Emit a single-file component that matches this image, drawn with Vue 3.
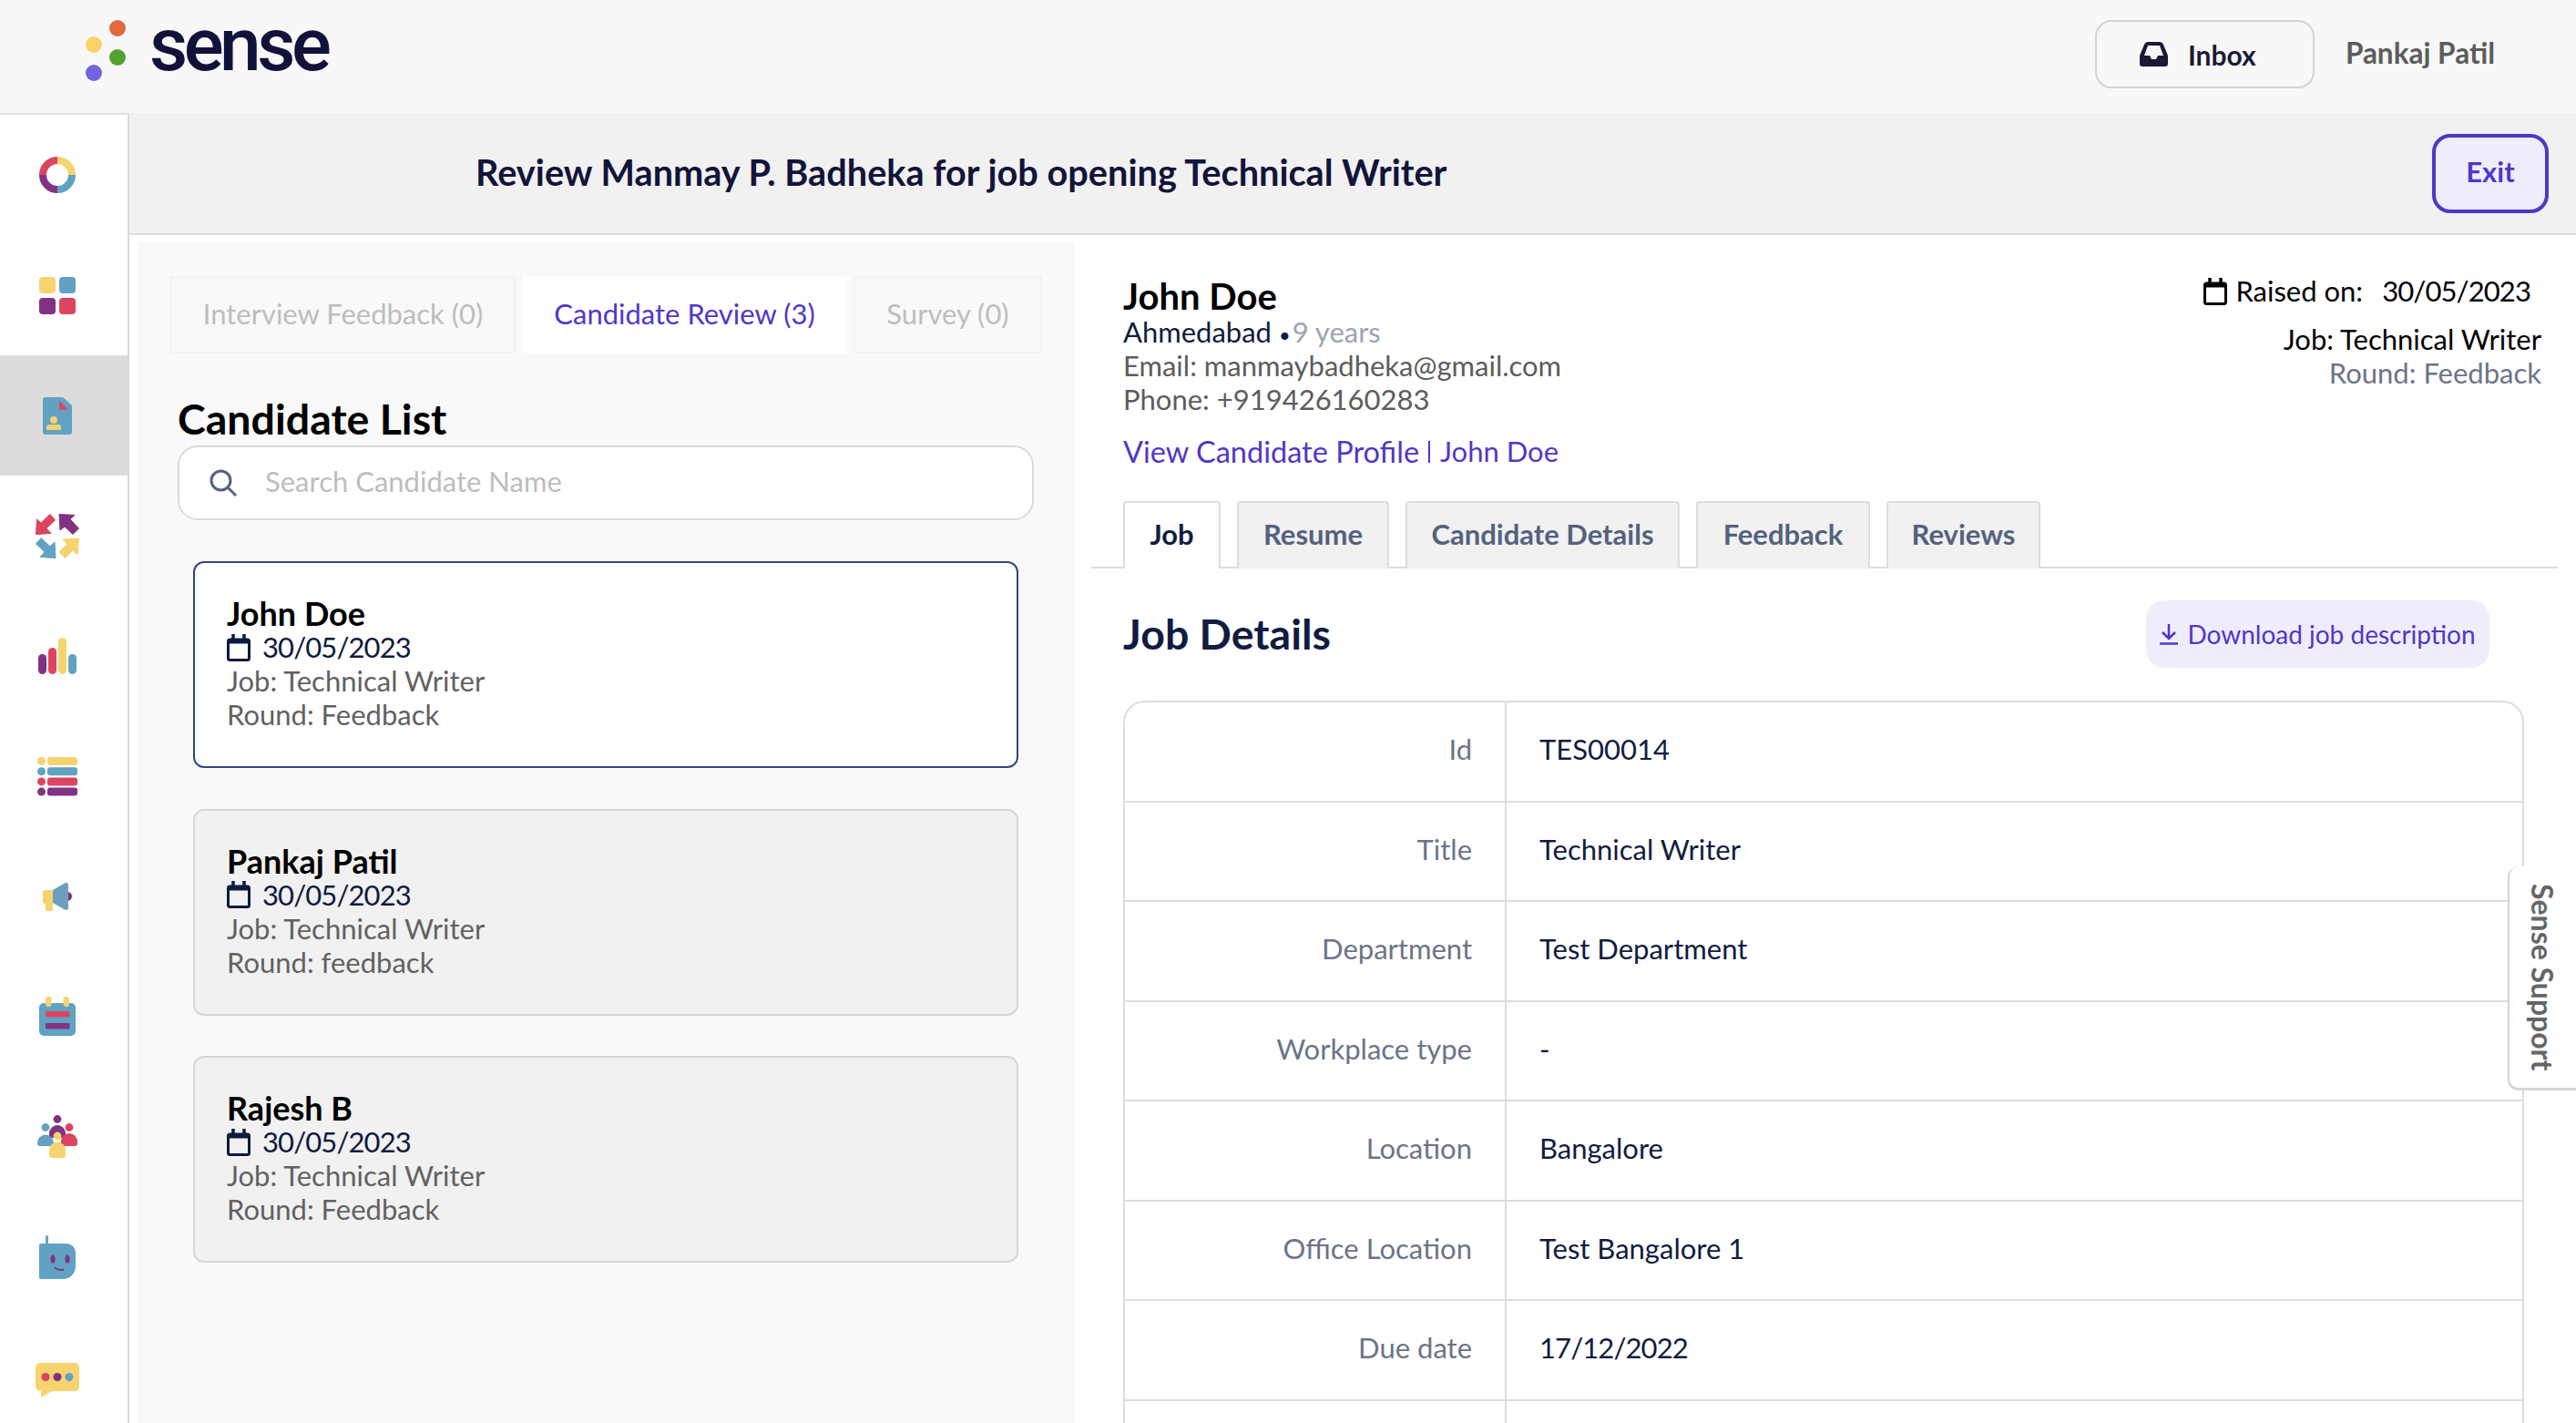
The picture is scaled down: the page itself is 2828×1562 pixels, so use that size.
<script setup>
const navIcons = ['donut', 'grid', 'doc', 'arrows', 'bars', 'list', 'mega', 'cal', 'people', 'robot', 'chat']
const candidates = [
  { name: 'John Doe', round: 'Feedback', selected: true },
  { name: 'Pankaj Patil', round: 'feedback', selected: false },
  { name: 'Rajesh B', round: 'Feedback', selected: false }
]
const detailTabs = ['Job', 'Resume', 'Candidate Details', 'Feedback', 'Reviews']
const rows = [
  ['Id', 'TES00014'],
  ['Title', 'Technical Writer'],
  ['Department', 'Test Department'],
  ['Workplace type', '-'],
  ['Location', 'Bangalore'],
  ['Office Location', 'Test Bangalore 1'],
  ['Due date', '17/12/2022'],
  ['', '']
]
</script>

<template>
  <div class="page">
    <header class="topbar">
      <div class="logo">
        <svg class="logo-dots" width="44" height="68" viewBox="0 0 44 68">
          <circle cx="35" cy="9" r="9" fill="#e3683a" />
          <circle cx="9" cy="27" r="9" fill="#fad468" />
          <circle cx="35" cy="41" r="9" fill="#53a32f" />
          <circle cx="9" cy="58" r="9" fill="#7264e0" />
        </svg>
        <span class="logo-text">sense</span>
      </div>
      <div class="top-right">
        <button class="inbox">
          <svg width="31" height="27" viewBox="0 0 31 27">
            <path fill="#1b1a35" fill-rule="evenodd" d="M9 0h13c2 0 3 1 4 3l5 12v9c0 2-1 3-3 3H3c-2 0-3-1-3-3v-9L5 3c1-2 2-3 4-3zM9 4 5 15h6l2 4h5l2-4h6L22 4z" />
          </svg>
          <span>Inbox</span>
        </button>
        <span class="user">Pankaj Patil</span>
      </div>
    </header>

    <div class="main">
      <nav class="sidebar">
        <div v-for="icon in navIcons" :key="icon" class="nav-item" :class="[icon, { active: icon === 'doc' }]">
          <svg v-if="icon === 'donut'" width="40" height="40" viewBox="0 0 40 40" fill="none" stroke-width="8">
            <path d="M20 4a16 16 0 0 1 16 16" stroke="#f6d36f" />
            <path d="M36 20a16 16 0 0 1-16 16" stroke="#61a2c3" />
            <path d="M20 36A16 16 0 0 1 4 20" stroke="#823283" />
            <path d="M4 20A16 16 0 0 1 20 4" stroke="#dc4560" />
          </svg>
          <svg v-else-if="icon === 'grid'" width="40" height="41" viewBox="0 0 40 41">
            <rect width="18" height="18" rx="4" fill="#f6d36f" />
            <rect x="22" width="18" height="18" rx="4" fill="#61a2c3" />
            <rect y="23" width="18" height="18" rx="4" fill="#823283" />
            <rect x="22" y="23" width="18" height="18" rx="4" fill="#dc4560" />
          </svg>
          <svg v-else-if="icon === 'doc'" width="32" height="41" viewBox="0 0 32 41">
            <path d="M3 0h19l10 9v29a3 3 0 0 1-3 3H3a3 3 0 0 1-3-3V3a3 3 0 0 1 3-3z" fill="#61a2c3" />
            <path d="M18 4l10 10H18z" fill="#dc4560" />
            <circle cx="12" cy="25" r="4" fill="#f6d36f" />
            <path d="M4 36v-3a3 3 0 0 1 3-3h10a3 3 0 0 1 3 3v3z" fill="#f6d36f" />
          </svg>
          <svg v-else-if="icon === 'arrows'" width="48" height="49" viewBox="0 0 48 49" stroke-width="1" stroke-linejoin="round">
            <polygon points="0.5,22.5 1.5,6 6,10 16,0.5 21.5,7 12,16 17,21.5" fill="#dc4560" stroke="#dc4560" />
            <polygon points="26,0.5 43,1.5 38,6 47.5,16 41,22.5 32,14 27,18" fill="#823283" stroke="#823283" />
            <polygon points="22,48.5 21,31 16,36 6,26.5 0.5,33 10,42 5,47.5" fill="#61a2c3" stroke="#61a2c3" />
            <polygon points="47.5,27 30,28 35,33.5 26,42 33,48.5 41,40 46,45" fill="#f6d36f" stroke="#f6d36f" />
          </svg>
          <svg v-else-if="icon === 'bars'" width="42" height="40" viewBox="0 0 42 40">
            <rect y="18" width="9" height="22" rx="4.5" fill="#823283" />
            <rect x="11" y="11" width="9" height="29" rx="4.5" fill="#dc4560" />
            <rect x="22" width="9" height="40" rx="4.5" fill="#f6d36f" />
            <rect x="33" y="18" width="9" height="22" rx="4.5" fill="#61a2c3" />
          </svg>
          <svg v-else-if="icon === 'list'" width="44" height="43" viewBox="0 0 44 43">
            <g v-for="(c, i) in ['#f6d36f', '#61a2c3', '#dc4560', '#823283']" :key="c" :fill="c">
              <circle cx="4.5" :cy="4.5 + i * 11.2" r="4.5" />
              <rect x="11" :y="i * 11.2" width="33" height="9" rx="3" />
            </g>
          </svg>
          <svg v-else-if="icon === 'mega'" width="32" height="31" viewBox="0 0 32 31">
            <path d="M27 10a5 5 0 0 1 0 10z" fill="#823283" />
            <path d="M3 8h8v15h0v6a2 2 0 0 1-2 2H5a2 2 0 0 1-2-2v-6H2a2 2 0 0 1-2-2V10a2 2 0 0 1 2-2z" fill="#f6d36f" />
            <path d="M11 8 24 .5c2-1 4 0 4 2v25c0 2-2 3-4 2L11 22z" fill="#6d9fbf" />
          </svg>
          <svg v-else-if="icon === 'cal'" width="40" height="43" viewBox="0 0 40 43">
            <rect y="7" width="40" height="36" rx="5" fill="#61a2c3" />
            <rect x="7" width="6.5" height="11" rx="3" fill="#f6d36f" />
            <rect x="26.5" width="6.5" height="11" rx="3" fill="#f6d36f" />
            <rect x="7" y="16" width="26.5" height="6.5" rx="1.5" fill="#dc4560" />
            <rect x="7" y="29" width="26.5" height="6.5" rx="1.5" fill="#823283" />
          </svg>
          <svg v-else-if="icon === 'people'" width="44" height="47" viewBox="0 0 44 47">
            <circle cx="22" cy="4.5" r="4.4" fill="#823283" />
            <path d="M13 25v-5a9 9 0 0 1 18 0v5z" fill="#823283" />
            <circle cx="9" cy="13.5" r="4.4" fill="#61a2c3" />
            <path d="M0 30.500a9 9 0 0 1 18 0V34H3a3 3 0 0 1-3-3z" fill="#61a2c3" />
            <circle cx="35" cy="13.500" r="4.400" fill="#dc4560" />
            <path d="M26 34v-5a9 9 0 0 1 18 0v2a3 3 0 0 1-3 3z" fill="#dc4560" />
            <circle cx="22" cy="23" r="4.400" fill="#f6d36f" />
            <path d="M13 38.500a9 9 0 0 1 18 0V44a3 3 0 0 1-3 3h-12a3 3 0 0 1-3-3z" fill="#f6d36f" />
          </svg>
          <svg v-else-if="icon === 'robot'" width="40" height="48" viewBox="0 0 40 48">
            <rect x="7" width="3" height="11" rx="1.500" fill="#61a2c3" />
            <path d="M2 9h28a10 10 0 0 1 10 10v15a14 14 0 0 1-14 14H2a2 2 0 0 1-2-2V11a2 2 0 0 1 2-2z" fill="#61a2c3" />
            <ellipse cx="15" cy="26" rx="2.500" ry="4.500" fill="#823283" />
            <ellipse cx="31" cy="26" rx="2.500" ry="4.500" fill="#823283" />
            <path d="M17 35c1 3 6 3 10 3" fill="none" stroke="#823283" stroke-width="2" />
          </svg>
          <svg v-else-if="icon === 'chat'" width="48" height="38" viewBox="0 0 48 38">
            <path d="M5 0h38a5 5 0 0 1 5 5v21a5 5 0 0 1-5 5H18L6 38v-7H5a5 5 0 0 1-5-5V5a5 5 0 0 1 5-5z" fill="#f6d36f" />
            <circle cx="11" cy="15.500" r="4.500" fill="#dc4560" />
            <circle cx="24" cy="15.500" r="4.500" fill="#823283" />
            <circle cx="37" cy="15.500" r="4.500" fill="#61a2c3" />
          </svg>
        </div>
      </nav>

      <div class="content">
        <div class="titlebar">
          <h1>Review Manmay P. Badheka for job opening Technical Writer</h1>
          <button class="exit">Exit</button>
        </div>

        <div class="body">
          <section class="left">
            <div class="left-tabs">
              <div class="left-tab">Interview Feedback (0)</div>
              <div class="left-tab on">Candidate Review (3)</div>
              <div class="left-tab">Survey (0)</div>
            </div>
            <h2 class="list-title">Candidate List</h2>
            <div class="search">
              <svg width="30" height="30" viewBox="0 0 30 30" fill="none" stroke="#55647f" stroke-width="3">
                <circle cx="12.500" cy="12.500" r="10.500" />
                <path d="M20 20l9 9" />
              </svg>
              <span>Search Candidate Name</span>
            </div>
            <div class="cards">
              <article v-for="c in candidates" :key="c.name" class="card" :class="{ selected: c.selected }">
                <div class="card-name">{{ c.name }}</div>
                <div class="card-date">
                  <svg width="26" height="30" viewBox="0 0 26 30" fill="none" stroke="#0e1a3f">
                    <rect x="1.500" y="6" width="23" height="22.500" rx="2" stroke-width="3" />
                    <path d="M1 8h24" stroke-width="5" />
                    <path d="M7 0v6M19 0v6" stroke-width="3.500" />
                  </svg>
                  <span class="num">30/05/2023</span>
                </div>
                <div class="card-sub">Job: Technical Writer</div>
                <div class="card-sub">Round: {{ c.round }}</div>
              </article>
            </div>
          </section>

          <section class="right">
            <div class="person">
              <div>
                <div class="person-name">John Doe</div>
                <div class="person-city">Ahmedabad <span class="dot">•</span><span class="years">9 years</span></div>
                <div class="person-sub">Email: manmaybadheka@gmail.com</div>
                <div class="person-sub">Phone: +919426160283</div>
                <div class="person-links">
                  <span class="profile">View Candidate Profile</span><i></i><span>John Doe</span>
                </div>
              </div>
              <div class="raised">
                <div class="raised-row">
                  <svg width="26" height="30" viewBox="0 0 26 30" fill="none" stroke="#000">
                    <rect x="1.500" y="6" width="23" height="22.500" rx="2" stroke-width="3" />
                    <path d="M1 8h24" stroke-width="5" />
                    <path d="M7 0v6M19 0v6" stroke-width="3.500" />
                  </svg>
                  <span>Raised on:</span>
                  <span class="raised-date num">30/05/2023</span>
                </div>
                <div class="raised-job">Job: Technical Writer</div>
                <div class="raised-round">Round: Feedback</div>
              </div>
            </div>

            <div class="detail-tabs">
              <div v-for="(t, i) in detailTabs" :key="t" class="detail-tab" :class="{ on: i === 0 }">{{ t }}</div>
            </div>

            <div class="job-head">
              <h2>Job Details</h2>
              <button class="download">
                <svg width="20" height="24" viewBox="0 0 20 24" fill="none" stroke="#5037c8" stroke-width="2.500">
                  <path d="M10 1v16M3 10l7 7 7-7M0 22.500h20" />
                </svg>
                <span>Download job description</span>
              </button>
            </div>

            <div class="table">
              <div v-for="(r, i) in rows" :key="i" class="row">
                <div class="cell-label">{{ r[0] }}</div>
                <div class="cell-value" :class="{ num: r[0] === 'Due date' }">{{ r[1] }}</div>
              </div>
            </div>
          </section>
        </div>
      </div>
    </div>

    <div class="support">Sense Support</div>
  </div>
</template>

<style>
html, body { margin: 0; background: #fff; }
</style>

<style scoped>
.page {
  position: relative;
  width: 2828px;
  height: 1562px;
  overflow: hidden;
  display: flex;
  flex-direction: column;
  font-family: "Lato", "Open Sans", sans-serif;
  font-size: 31px;
  color: #101c40;
  background: #fff;
}
button { font-family: inherit; cursor: pointer; }
h1, h2 { margin: 0; }
.num { letter-spacing: -0.9px; }

.topbar {
  height: 124px;
  flex: none;
  background: #f8f8f8;
  display: flex;
  justify-content: space-between;
  align-items: center;
}
.logo { display: flex; align-items: flex-start; align-self: flex-start; margin-left: 94px; }
.logo-dots { margin-top: 22px; }
.logo-text {
  margin: 8px 0 0 26px;
  font-family: "Roboto", sans-serif;
  font-size: 82px;
  font-weight: 500;
  letter-spacing: -4.500px;
  color: #11123a;
  line-height: 82px;
}
.top-right { display: flex; align-items: center; margin-right: 89px; margin-top: -5px; }
.inbox {
  width: 241px;
  height: 75px;
  box-sizing: border-box;
  padding: 0 0 0 47px;
  border: 2px solid #d3d3d3;
  border-radius: 18px;
  background: transparent;
  display: flex;
  align-items: center;
  gap: 22px;
  font-size: 30px;
  font-weight: 700;
  color: #1b1a35;
}
.user {
  margin-left: 34px;
  font-size: 31.500px;
  font-weight: 700;
  color: #5c5c5c;
  margin-top: -4px;
}

.main { flex: 1; display: flex; min-height: 0; }
.sidebar {
  width: 140px;
  flex: none;
  border-right: 2px solid #d9d9d9;
  border-top: 2px solid #e0e0e0;
  background: #fff;
}
.nav-item {
  height: 132px;
  box-sizing: border-box;
  padding-right: 14px;
  display: flex;
  align-items: center;
  justify-content: center;
}
.nav-item.active { background: #dcdcdc; }
.nav-item.chat svg { margin-top: 5px; }
.nav-item.cal svg { margin-top: -2px; }
.nav-item.people svg { margin-top: -2px; }

.content { flex: 1; min-width: 0; display: flex; flex-direction: column; }
.titlebar {
  height: 132px;
  flex: none;
  background: #f1f1f1;
  border-bottom: 2px solid #dcdce4;
  display: flex;
  align-items: center;
  justify-content: space-between;
  padding-left: 380px;
  padding-right: 30px;
}
.titlebar h1 { font-size: 39.700px; font-weight: 700; color: #12143a; margin-top: -3px; }
.exit {
  width: 128px;
  height: 87px;
  border: 4px solid #5037c8;
  border-radius: 20px;
  background: #efedfb;
  color: #5037c8;
  font-size: 31px;
  font-weight: 700;
  padding-bottom: 5px;
}

.body { flex: 1; display: flex; min-height: 0; padding-top: 8px; }
.left {
  width: 1029px;
  margin-left: 9px;
  flex: none;
  box-sizing: border-box;
  background: #f9f9f9;
  padding: 37px 0 0 36px;
}
.left-tabs {
  display: grid;
  grid-template-columns: 379px 357px 207px;
  gap: 7px;
}
.left-tab {
  height: 85px;
  box-sizing: border-box;
  border: 2px solid #f2f2f2;
  padding-bottom: 4px;
  display: flex;
  align-items: center;
  justify-content: center;
  color: #bdbdbd;
}
.left-tab.on { background: #fff; border-color: #fff; color: #5037c8; }
.list-title {
  margin: 46px 0 0 8px;
  height: 55px;
  line-height: 50px;
  font-size: 46.500px;
  font-weight: 700;
  color: #000;
}
.search {
  margin-left: 8px;
  width: 940px;
  height: 82px;
  box-sizing: border-box;
  border: 2px solid #dadada;
  border-radius: 22px;
  background: #fff;
  display: flex;
  align-items: center;
  padding: 0 0 0 33px;
  gap: 31px;
  color: #bdbdbd;
}
.search span { margin-top: -5px; }
.cards {
  margin: 45px 0 0 25px;
  width: 906px;
  display: flex;
  flex-direction: column;
  gap: 44.500px;
}
.card {
  height: 227px;
  box-sizing: border-box;
  border: 2px solid #d6d6d6;
  border-radius: 12px;
  background: #f1f1f1;
  padding: 37px 0 0 35px;
  line-height: 37px;
}
.card.selected { background: #fff; border-color: #34467c; }
.card-name { font-size: 36px; font-weight: 700; color: #000; }
.card-date { display: flex; align-items: center; gap: 13px; color: #0e1a3f; }
.card-sub { color: #616161; }

.right { flex: 1; min-width: 0; padding: 38px 0 0 53px; }
.person {
  display: flex;
  justify-content: space-between;
  width: 1557px;
  line-height: 37px;
}
.person-name { font-size: 40px; font-weight: 700; color: #000; line-height: 42px; }
.person-city { height: 37px; }
.person-city .dot { font-size: 22px; }
.person-city .years { color: #9aa3b5; margin-left: 2px; }
.person-sub { color: #5c5c5c; }
.person-links {
  margin-top: 20px;
  height: 37px;
  display: flex;
  align-items: center;
  color: #5037c8;
}
.profile { font-size: 32.500px; }
.person-links i {
  display: block;
  width: 2px;
  height: 24px;
  margin: 0 11px 0 10px;
  background: #5037c8;
}
.raised { text-align: right; color: #000; }
.raised-row {
  display: flex;
  align-items: center;
  justify-content: flex-end;
  margin-top: -3px;
  margin-right: 12px;
  gap: 9px;
}
.raised-date { margin-left: 12px; }
.raised-job { margin-top: 16px; }
.raised-round { color: #6b7488; }

.detail-tabs {
  margin: 36px 0 0 -35px;
  padding-left: 35px;
  width: 1610px;
  height: 74px;
  box-sizing: border-box;
  border-bottom: 2px solid #dcdce4;
  display: grid;
  grid-template-columns: 107px 167px 301px 191px 169px;
  gap: 18px;
}
.detail-tab {
  height: 74px;
  box-sizing: border-box;
  border: 2px solid #dcdce4;
  border-bottom: none;
  border-radius: 4px 4px 0 0;
  background: #f1f1f1;
  padding-bottom: 4px;
  display: flex;
  align-items: center;
  justify-content: center;
  color: #55617d;
  font-weight: 700;
}
.detail-tab.on { background: #fff; color: #101c40; }

.job-head {
  width: 1500px;
  margin-top: 35px;
  display: flex;
  justify-content: space-between;
  align-items: center;
}
.job-head h2 { font-size: 46.500px; font-weight: 700; color: #101c40; margin-top: -3px; }
.download {
  width: 377px;
  height: 74px;
  padding: 0;
  border: none;
  border-radius: 20px;
  background: #efedfb;
  color: #5037c8;
  font-size: 28px;
  white-space: nowrap;
  display: flex;
  align-items: center;
  justify-content: center;
  gap: 10px;
}

.table {
  width: 1538px;
  box-sizing: border-box;
  margin-top: 36px;
  border: 2px solid #dcdce4;
  border-radius: 24px 24px 0 0;
}
.row {
  display: flex;
  height: 109.500px;
  box-sizing: border-box;
  border-bottom: 2px solid #dcdce4;
  align-items: stretch;
}
.cell-label {
  width: 419px;
  flex: none;
  box-sizing: border-box;
  border-right: 2px solid #dcdce4;
  padding-right: 36px;
  text-align: right;
  line-height: 103px;
  color: #6b7488;
}
.cell-value {
  padding-left: 36px;
  line-height: 103px;
  color: #101c40;
}

.support {
  position: absolute;
  top: 951px;
  right: 0;
  width: 75px;
  height: 246px;
  box-sizing: border-box;
  background: #fff;
  border-radius: 12px 0 0 12px;
  border-left: 2px solid #d4d4d4;
  border-bottom: 3px solid #d4d4d4;
  writing-mode: vertical-rl;
  display: flex;
  align-items: center;
  justify-content: center;
  font-size: 32px;
  font-weight: 700;
  color: #666;
}
</style>
